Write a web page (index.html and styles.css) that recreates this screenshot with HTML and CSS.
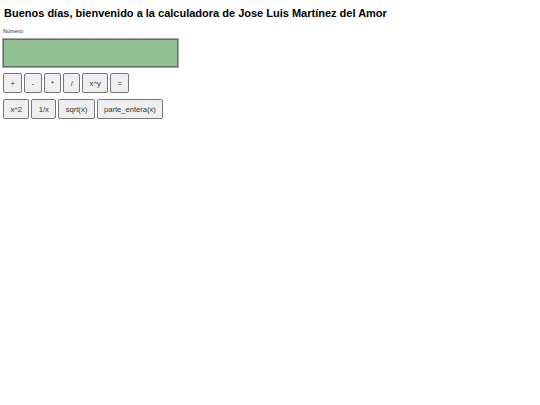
FILE: index.html
```html
<!DOCTYPE html>
<html lang="es">
<head>
<meta charset="utf-8">
<title>Calculadora</title>
<link rel="stylesheet" href="styles.css">
</head>
<body>
<h1 class="title">Buenos días, bienvenido a la calculadora de Jose Luis Martínez del Amor</h1>
<label class="label" for="num">Número:</label>
<input class="display" id="num" type="text">
<div class="row">
  <button class="btn">+</button>
  <button class="btn">-</button>
  <button class="btn">*</button>
  <button class="btn">/</button>
  <button class="btn">x^y</button>
  <button class="btn">=</button>
</div>
<div class="row">
  <button class="btn">x^2</button>
  <button class="btn">1/x</button>
  <button class="btn">sqrt(x)</button>
  <button class="btn">parte_entera(x)</button>
</div>
</body>
</html>
```
FILE: styles.css
```css
body {
  margin: 0;
  padding: 7px 3px;
  font-family: "Liberation Sans", Arial, sans-serif;
  background: #fff;
  color: #000;
}
.title {
  margin: 0 0 0 1px;
  font-size: 11px;
  font-weight: bold;
  line-height: 13px;
}
.label {
  display: block;
  margin-top: 8px;
  font-size: 5.5px;
  line-height: 7px;
  color: #333;
}
.display {
  display: block;
  box-sizing: border-box;
  margin-top: 4px;
  width: 175px;
  height: 28px;
  background: #93c193;
  border: 1px solid #5f725f;
  box-shadow: 0 0 0 1px #a9a9a9;
  padding: 0;
}
.row {
  display: flex;
  gap: 2px;
  margin-top: 6px;
}
.btn {
  box-sizing: border-box;
  height: 20px;
  padding: 0 6.4px;
  font-family: "Liberation Sans", Arial, sans-serif;
  font-size: 7.6px;
  font-weight: normal;
  background: #efefef;
  border: 1px solid #767676;
  border-radius: 2px;
  color: #333;
}
```
